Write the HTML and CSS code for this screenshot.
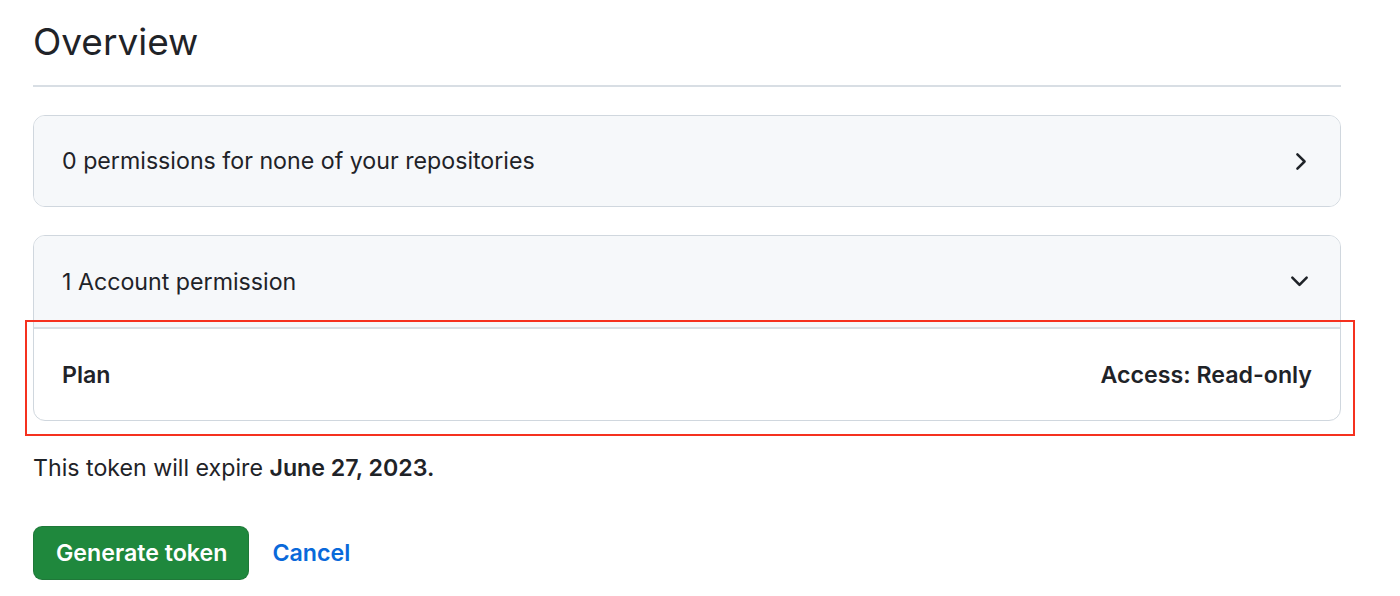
FILE: index.html
```html
<!DOCTYPE html>
<html lang="en">
<head>
<meta charset="utf-8">
<title>Overview</title>
<link rel="stylesheet" href="styles.css">
</head>
<body>
<main class="page">
  <h1 class="title">Overview</h1>

  <div class="panel">
    <div class="panel-head">
      <span>0 permissions for none of your repositories</span>
      <svg class="chev" width="27" height="27" viewBox="0 0 16 16" aria-hidden="true"><path d="M6.22 3.22a.75.75 0 0 1 1.06 0l4.25 4.25a.75.75 0 0 1 0 1.06l-4.25 4.25a.751.751 0 0 1-1.042-.018.751.751 0 0 1-.018-1.042L9.94 8 6.22 4.280a.75.75 0 0 1 0-1.06Z"/></svg>
    </div>
  </div>

  <div class="panel panel-open">
    <div class="panel-head">
      <span>1 Account permission</span>
      <svg class="chev" width="27" height="27" viewBox="0 0 16 16" aria-hidden="true"><path d="M12.78 5.22a.749.749 0 0 1 0 1.06l-4.25 4.25a.749.749 0 0 1-1.060 0L3.22 6.28a.749.749 0 1 1 1.06-1.06L8 8.939l3.72-3.719a.749.749 0 0 1 1.06 0Z"/></svg>
    </div>
    <div class="panel-row">
      <strong>Plan</strong>
      <strong>Access: Read-only</strong>
    </div>
    <div class="highlight"></div>
  </div>

  <p class="expire">This token will expire <strong>June 27, 2023.</strong></p>

  <div class="actions">
    <button class="btn-primary" type="button">Generate token</button>
    <a class="link" href="#">Cancel</a>
  </div>
</main>
</body>
</html>
```

FILE: styles.css
```css
* { box-sizing: border-box; }
html, body { margin: 0; background: #ffffff; }
body {
  font-family: Inter, "Liberation Sans", Arial, sans-serif;
  color: #1f2328;
}
.page {
  width: 1308px;
  margin-left: 33px;
  padding-top: 18px;
}
.title {
  margin: 0;
  font-size: 37px;
  font-weight: 400;
  line-height: 48px;
  padding-bottom: 19px;
  border-bottom: 2px solid #d8dee4;
}
.panel {
  position: relative;
  margin-top: 28px;
  border: 1px solid #d0d7de;
  border-radius: 12px;
  background: #ffffff;
}
.panel + .panel { margin-top: 28px; }
.panel-head {
  display: flex;
  align-items: center;
  justify-content: space-between;
  height: 90px;
  padding: 0 27px 0 28px;
  background: #f6f8fa;
  border-radius: 11px;
  font-size: 23.2px;
}
.panel-open .panel-head {
  height: 93px;
  border-radius: 11px 11px 0 0;
  border-bottom: 2px solid #d8dee4;
}
.chev { fill: #1f2328; flex-shrink: 0; }
.panel-row {
  display: flex;
  align-items: center;
  justify-content: space-between;
  height: 91px;
  padding: 0 28px;
  font-size: 23.2px;
  border-radius: 0 0 11px 11px;
}
.panel-row strong { font-weight: 600; }
.highlight {
  position: absolute;
  left: -9px;
  top: 84px;
  width: 1330px;
  height: 116px;
  border: 2px solid #f5311f;
  pointer-events: none;
}
.expire {
  margin: 32px 0 0;
  font-size: 23.2px;
  line-height: 30px;
}
.expire strong { font-weight: 600; }
.actions {
  display: flex;
  align-items: center;
  gap: 23px;
  margin-top: 43px;
}
.btn-primary {
  height: 54px;
  padding: 0 21px 0 22px;
  border: 1px solid rgba(31, 35, 40, 0.15);
  border-radius: 9px;
  background: #1f883d;
  color: #ffffff;
  font-family: inherit;
  font-size: 23.2px;
  font-weight: 600;
}
.link {
  color: #0969da;
  text-decoration: none;
  font-size: 23.2px;
  font-weight: 600;
}
```
